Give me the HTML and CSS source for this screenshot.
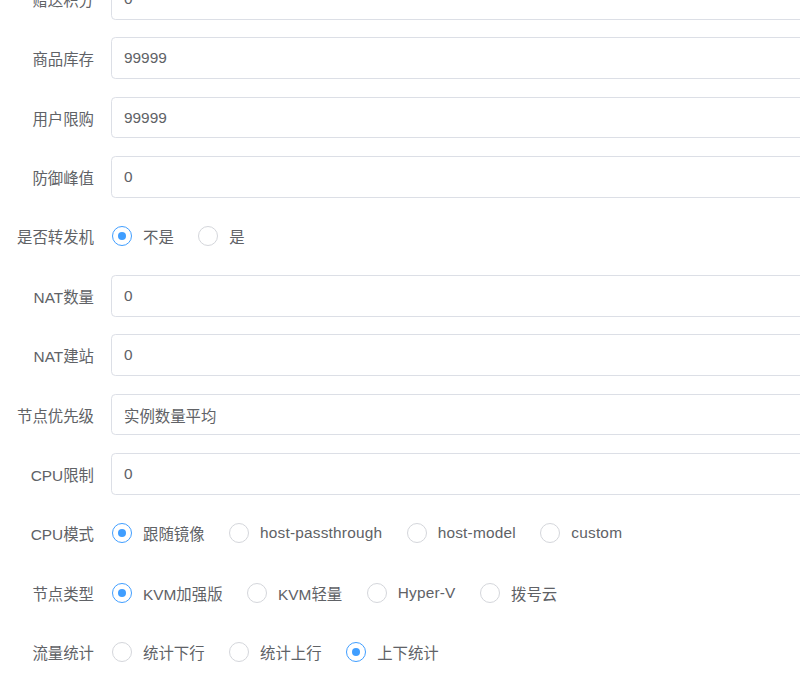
FILE: index.html
```html
<!DOCTYPE html>
<html lang="zh">
<head>
<meta charset="utf-8">
<link rel="stylesheet" href="styles.css">
</head>
<body>
<form class="form">
  <div class="item"><label class="label">赠送积分</label><div class="input">0</div></div>
  <div class="item"><label class="label">商品库存</label><div class="input">99999</div></div>
  <div class="item"><label class="label">用户限购</label><div class="input">99999</div></div>
  <div class="item"><label class="label">防御峰值</label><div class="input">0</div></div>
  <div class="item"><label class="label">是否转发机</label>
    <div class="radios">
      <span class="radio checked"><span class="dot"></span><span class="rtext">不是</span></span>
      <span class="radio"><span class="dot"></span><span class="rtext">是</span></span>
    </div>
  </div>
  <div class="item"><label class="label">NAT数量</label><div class="input">0</div></div>
  <div class="item"><label class="label">NAT建站</label><div class="input">0</div></div>
  <div class="item"><label class="label">节点优先级</label><div class="input">实例数量平均</div></div>
  <div class="item"><label class="label">CPU限制</label><div class="input">0</div></div>
  <div class="item"><label class="label">CPU模式</label>
    <div class="radios">
      <span class="radio checked"><span class="dot"></span><span class="rtext">跟随镜像</span></span>
      <span class="radio"><span class="dot"></span><span class="rtext latin">host-passthrough</span></span>
      <span class="radio"><span class="dot"></span><span class="rtext latin">host-model</span></span>
      <span class="radio"><span class="dot"></span><span class="rtext latin">custom</span></span>
    </div>
  </div>
  <div class="item"><label class="label">节点类型</label>
    <div class="radios">
      <span class="radio checked"><span class="dot"></span><span class="rtext">KVM加强版</span></span>
      <span class="radio"><span class="dot"></span><span class="rtext">KVM轻量</span></span>
      <span class="radio"><span class="dot"></span><span class="rtext latin">Hyper-V</span></span>
      <span class="radio"><span class="dot"></span><span class="rtext">拨号云</span></span>
    </div>
  </div>
  <div class="item"><label class="label">流量统计</label>
    <div class="radios">
      <span class="radio"><span class="dot"></span><span class="rtext">统计下行</span></span>
      <span class="radio"><span class="dot"></span><span class="rtext">统计上行</span></span>
      <span class="radio checked"><span class="dot"></span><span class="rtext">上下统计</span></span>
    </div>
  </div>
  <div class="item"><label class="label">&nbsp;</label><div class="input">&nbsp;</div></div>
</form>
</body>
</html>
```
FILE: styles.css
```css
html, body {
  margin: 0;
  padding: 0;
  background: #fff;
  overflow: hidden;
  height: 691px;
}
body {
  font-family: "Liberation Sans", Arial, "Noto Sans CJK SC", sans-serif;
  font-size: 15.4px;
  color: #606266;
}
.form {
  margin-top: -22px;
  display: flex;
  flex-direction: column;
  gap: 17.8px;
}
.item {
  display: flex;
  align-items: center;
  height: 41.6px;
}
.label {
  flex: 0 0 111px;
  box-sizing: border-box;
  padding-right: 17px;
  text-align: right;
  white-space: nowrap;
  color: #606266;
}
.input {
  flex: 0 0 760px;
  box-sizing: border-box;
  height: 41.6px;
  border: 1px solid #dcdfe6;
  border-radius: 4.4px;
  padding: 0 12px;
  display: flex;
  align-items: center;
  white-space: nowrap;
}
.radios {
  display: flex;
  align-items: center;
  gap: 24.5px;
  padding-left: 1px;
}
.radio {
  display: flex;
  align-items: center;
  gap: 11px;
  white-space: nowrap;
}
.dot {
  width: 20px;
  height: 20px;
  box-sizing: border-box;
  border: 1.5px solid #d4d6db;
  border-radius: 50%;
  display: flex;
  align-items: center;
  justify-content: center;
  background: #fff;
}
.radio.checked .dot {
  border-color: #409eff;
}
.radio.checked .dot::after {
  content: "";
  width: 8px;
  height: 8px;
  border-radius: 50%;
  background: #409eff;
}
.rtext {
  color: #606266;
}
.rtext.latin {
  letter-spacing: 0.2px;
}
```
